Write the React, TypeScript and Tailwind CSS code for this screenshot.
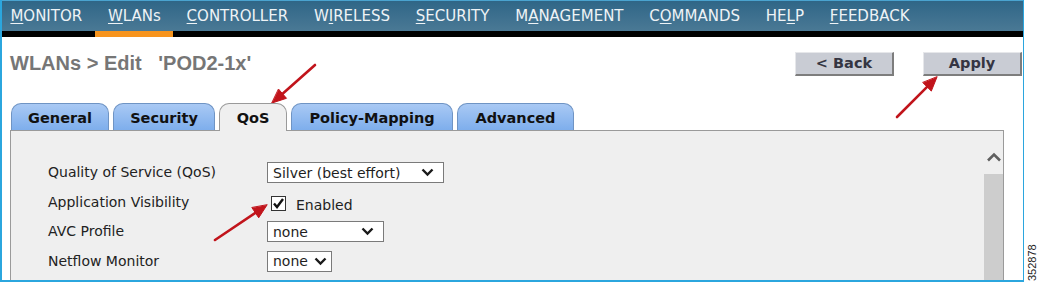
import React from "react";

const navItems: { pre: string; u: string; post: string }[] = [
  { pre: "", u: "M", post: "ONITOR" },
  { pre: "", u: "W", post: "LANs" },
  { pre: "", u: "C", post: "ONTROLLER" },
  { pre: "W", u: "I", post: "RELESS" },
  { pre: "", u: "S", post: "ECURITY" },
  { pre: "M", u: "A", post: "NAGEMENT" },
  { pre: "C", u: "O", post: "MMANDS" },
  { pre: "HE", u: "L", post: "P" },
  { pre: "", u: "F", post: "EEDBACK" },
];

const tabs = [
  { label: "General", w: "w-[98px]", active: false },
  { label: "Security", w: "w-[102px]", active: false },
  { label: "QoS", w: "w-[68px]", active: true },
  { label: "Policy-Mapping", w: "w-[162px]", active: false },
  { label: "Advanced", w: "w-[117px]", active: false },
];

function Chevron() {
  return (
    <svg width="13" height="9" viewBox="0 0 13 9" className="shrink-0">
      <path d="M1.5 1.5 L6.5 6.5 L11.5 1.5" fill="none" stroke="#1a1a1a" strokeWidth="2.4" />
    </svg>
  );
}

function Select({ value, w, pr }: { value: string; w: string; pr: string }) {
  return (
    <div className={`${w} ${pr} h-[21px] bg-white border border-[#7a7a7a] flex items-center justify-between gap-[3px] pl-[5px] text-[14px] text-[#1e1e1e]`}>
      <span className="leading-none">{value}</span>
      <Chevron />
    </div>
  );
}

export default function App() {
  const font = { fontFamily: '"DejaVu Sans", Verdana, sans-serif' };
  return (
    <div className="w-[1039px] h-[283px] bg-white relative overflow-hidden" style={font}>
      <div className="w-[1024px] h-[282px] border-l-2 border-r border-b-2 border-[#2ba6de] flex flex-col">
        {/* nav */}
        <div className="h-[31px] bg-gradient-to-b from-[#2f6687] to-[#4a7995] border-t border-[#4aa3cf] flex items-center">
          <div className="flex items-center ml-[-4.5px]">
            {navItems.map((n, i) => (
              <div key={i} className="px-[12.9px] text-[15px] text-[#eef3f6] whitespace-pre leading-none">
                {n.pre}
                <span className="underline underline-offset-[2px] decoration-1">{n.u}</span>
                {n.post}
              </div>
            ))}
          </div>
        </div>
        <div className="h-[6px] bg-black flex">
          <div className="ml-[93px] w-[78px] bg-[#f7941d]" />
        </div>

        {/* header */}
        <div className="flex items-start justify-between pl-[8px] pr-[1px] pt-[14px] h-[66px]">
          <div
            className="text-[20px] leading-[24px] font-bold text-[#767676] whitespace-pre"
            style={{ fontFamily: '"Liberation Sans", Arial, sans-serif' }}
          >
            {"WLANs > Edit   'POD2-1x'"}
          </div>
          <div className="flex gap-[29px] pt-[1px]">
            {["< Back", "Apply"].map((b) => (
              <div
                key={b}
                className="w-[99px] h-[24px] bg-[#c9ccd4] border-t border-l border-[#e6e7ea] border-r-2 border-b-2 border-r-[#7d7d7d] border-b-[#7d7d7d] flex items-center justify-center pt-[1px] text-[14.5px] font-bold text-[#353542]"
              >
                {b}
              </div>
            ))}
          </div>
        </div>

        {/* tabs */}
        <div className="flex gap-[4px] ml-[9px] h-[27px] relative z-10">
          {tabs.map((t) => (
            <div
              key={t.label}
              className={`${t.w} ${
                t.active
                  ? "bg-[#efefef] border-[#9a9a9a] h-[28px]"
                  : "bg-gradient-to-b from-[#a9c9f4] to-[#7eaeec] border-[#6f94c4] h-[27px]"
              } border border-b-0 rounded-t-[10px] flex items-center justify-center pt-[3px] text-[14.5px] font-bold text-[#111]`}
            >
              {t.label}
            </div>
          ))}
        </div>

        {/* panel */}
        <div className="ml-[8px] w-[994px] flex-1 bg-[#efefef] border-l border-t border-r border-[#9a9a9a] flex">
          <div className="flex-1 pl-[37px] pt-[27px] text-[14px] text-[#222]">
            <div className="flex items-center h-[29.5px]">
              <div className="w-[219px]">Quality of Service (QoS)</div>
              <Select value="Silver (best effort)" w="w-[177px]" pr="pr-[9px]" />
            </div>
            <div className="flex items-center h-[29.5px]">
              <div className="w-[219px]">Application Visibility</div>
              <div className="flex items-center pl-[4px] pt-[2px]">
                <div className="w-[15px] h-[15px] border border-[#333] bg-white flex items-center justify-center">
                  <svg width="13" height="13" viewBox="0 0 13 13">
                    <path d="M2 6.5 L5 10 L11 2" fill="none" stroke="#111" strokeWidth="2.4" />
                  </svg>
                </div>
                <span className="ml-[10px] text-[14px] mt-[4px]">Enabled</span>
              </div>
            </div>
            <div className="flex items-center h-[29.5px]">
              <div className="w-[219px]">AVC Profile</div>
              <Select value="none" w="w-[117px]" pr="pr-[9px]" />
            </div>
            <div className="flex items-center h-[29.5px]">
              <div className="w-[219px]">Netflow Monitor</div>
              <Select value="none" w="w-[65px]" pr="pr-[4px]" />
            </div>
          </div>
          {/* scrollbar */}
          <div className="w-[19px] flex flex-col items-center pt-[21px]">
            <svg width="16" height="10" viewBox="0 0 16 10">
              <path d="M2 8.5 L8 2.5 L14 8.5" fill="none" stroke="#5f5f5f" strokeWidth="2.6" />
            </svg>
            <div className="mt-[12px] w-full flex-1 bg-[#cdcdcd]" />
          </div>
        </div>
      </div>

      {/* red arrows */}
      <svg className="absolute left-0 top-0 pointer-events-none" width="1039" height="283">
        <g fill="#c1141b" stroke="#c1141b" strokeWidth="2.6" strokeLinecap="round">
          <line x1="315" y1="65" x2="282.6" y2="93.8" />
          <polygon points="272,103 286.5,98.3 278.7,89.3" strokeWidth="1" />
          <line x1="897" y1="117" x2="927.1" y2="86.9" />
          <polygon points="937,77 931.3,91.1 922.9,82.7" strokeWidth="1" />
          <line x1="215" y1="240" x2="255.4" y2="212.8" />
          <polygon points="267,205 258.7,217.8 252,207.8" strokeWidth="1" />
        </g>
      </svg>

      {/* figure number */}
      <div
        className="absolute left-[1027px] top-[281px] origin-top-left -rotate-90 text-[11px] text-[#222] leading-none"
        style={{ fontFamily: '"Liberation Sans", Arial, sans-serif' }}
      >
        352878
      </div>
    </div>
  );
}
